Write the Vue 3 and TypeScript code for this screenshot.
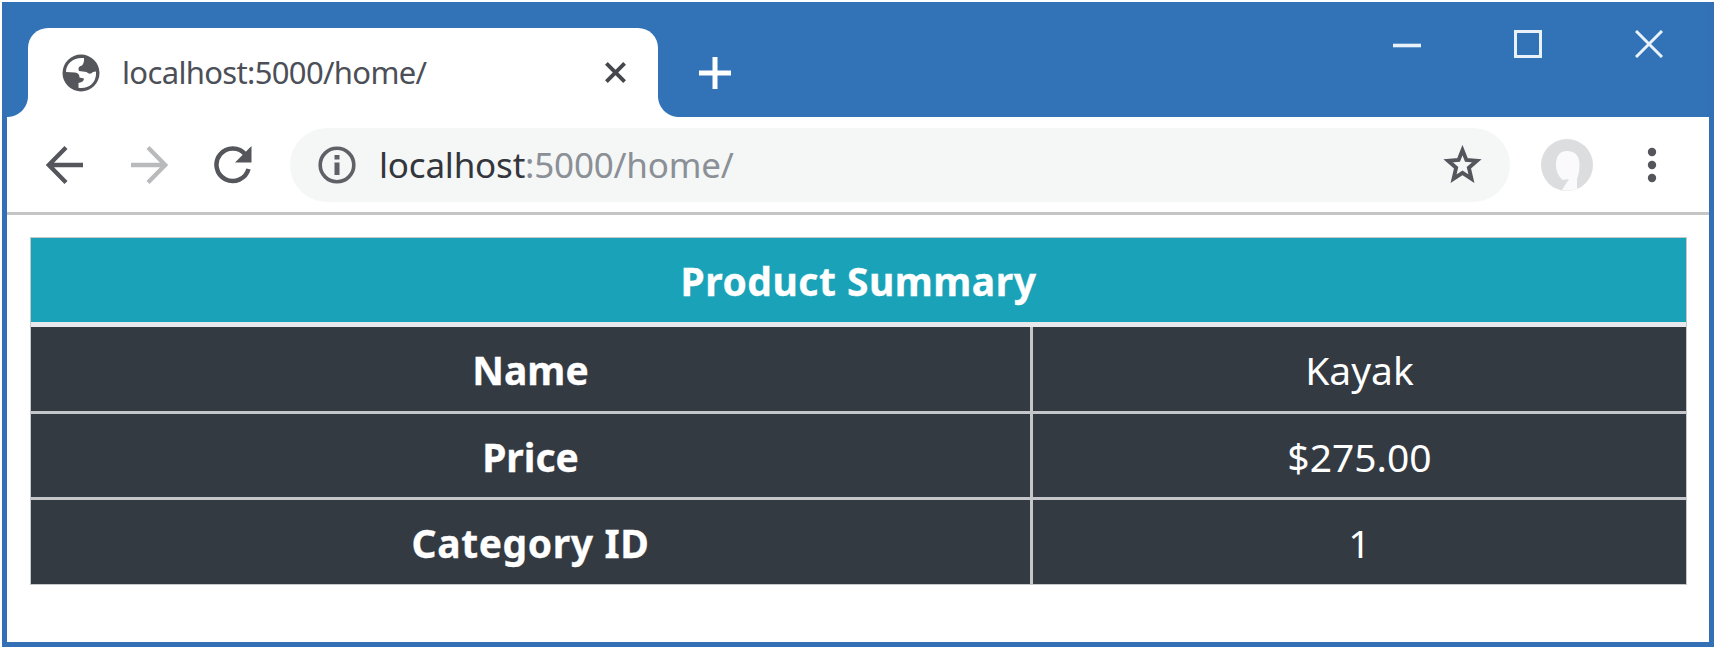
<script setup lang="ts">
interface SummaryRow {
  label: string
  value: string
  id: string
}

const rows: SummaryRow[] = [
  { label: 'Name', value: 'Kayak', id: 'name' },
  { label: 'Price', value: '$275.00', id: 'price' },
  { label: 'Category ID', value: '1', id: 'category' },
]
</script>

<template>
  <div class="window">
    <header class="titlebar">
      <div class="tab">
        <svg class="globe" viewBox="0 0 38 38">
          <circle cx="19" cy="19" r="18.5" fill="#54565b" />
          <path d="M22 4C12 3 4 9 4 18L13 18.500Q17.500 19 17.500 23.500L22 24.500Q22 28 16.500 29V33.700C26 35 33 30 34 21V17.500L31 18Q28 21.500 24.500 18L17 17Q15 12.500 20 11.500Q22.500 9 22 4Z" fill="#fff" />
        </svg>
        <span class="tab-title">localhost:5000/home/</span>
        <svg class="tab-close" viewBox="0 0 24 24"><path d="M2.500 2.500 21.500 21.500M21.500 2.500 2.500 21.500" stroke="#45474c" stroke-width="4" /></svg>
      </div>
      <svg class="plus" viewBox="0 0 32 32"><path d="M16 0V32M0 16H32" stroke="#fff" stroke-width="5" /></svg>
      <div class="controls">
        <svg viewBox="0 0 28 28"><path d="M0 15.500H28" stroke-width="3.600" /></svg>
        <svg viewBox="0 0 28 28"><path d="M1.500 1.500H26.500V26.500H1.500Z" /></svg>
        <svg viewBox="0 0 28 28"><path d="M1 1 27 27M27 1 1 27" /></svg>
      </div>
    </header>

    <nav class="toolbar">
      <svg class="nav-icon" viewBox="0 0 38 38"><path d="M37 19H3M20 1.500 2.800 19 20 36.500" fill="none" stroke="#54565b" stroke-width="4.300" /></svg>
      <svg class="nav-icon forward" viewBox="0 0 38 38"><path d="M1 19H35M18 1.500 35.200 19 18 36.500" fill="none" stroke="#b9babb" stroke-width="4.300" /></svg>
      <svg class="nav-icon reload" viewBox="0 0 38 38">
        <path d="M31.500 8.500A16.300 16.300 0 1 0 34.500 23" fill="none" stroke="#54565b" stroke-width="4.500" />
        <path d="M37.500 0V16.500H21Z" fill="#54565b" />
      </svg>
      <div class="address">
        <svg class="info" viewBox="0 0 38 38">
          <circle cx="19" cy="19" r="16.800" fill="none" stroke="#5f6166" stroke-width="3.600" />
          <path d="M19 9V13.500M19 16.500V29" stroke="#5f6166" stroke-width="5" />
        </svg>
        <span class="url"><span class="host">localhost</span>:5000/home/</span>
        <svg class="star" viewBox="0 0 38 38"><path d="M19 5 22.800 14.500 33 15.400 25.200 22.200 27.700 32.800 19 27.200 10.300 32.800 12.800 22.200 5 15.400 15.200 14.500Z" fill="none" stroke="#54565b" stroke-width="3.800" /></svg>
      </div>
      <svg class="avatar" viewBox="0 0 52 52">
        <circle cx="26" cy="26" r="26" fill="#dcdddf" />
        <path d="M26 12C18 12 15 18 15 26C15 33 18 38 22 41L28 40L21 51Q28 53 36 50V40C38 35 38.500 30 38.500 25C38.500 17 34 12 26 12Z" fill="#fafafc" />
      </svg>
      <svg class="menu" viewBox="0 0 10 36"><g fill="#54565b"><circle cx="5" cy="5" r="4.200" /><circle cx="5" cy="18" r="4.200" /><circle cx="5" cy="31" r="4.200" /></g></svg>
    </nav>

    <main class="page">
      <section class="summary">
        <div class="heading"><span class="text-heading">Product Summary</span></div>
        <div v-for="row in rows" :key="row.id" class="row">
          <div class="label"><span :class="'label-' + row.id">{{ row.label }}</span></div>
          <div class="value"><span :class="'value-' + row.id">{{ row.value }}</span></div>
        </div>
      </section>
    </main>
  </div>
</template>

<style>
html,
body {
  margin: 0;
  background: #fff;
  overflow: hidden;
}
</style>

<style scoped>
.window {
  box-sizing: border-box;
  width: 1712px;
  height: 645px;
  margin: 2px;
  border: 5px solid #3470b5;
  border-top: 0;
  background: #fff;
  font-family: "Noto Sans", "Open Sans", sans-serif;
  white-space: nowrap;
}
svg {
  display: block;
  flex: none;
}
.titlebar {
  display: flex;
  height: 115px;
  background: #3272b6;
}
.tab {
  position: relative;
  box-sizing: border-box;
  display: flex;
  align-items: center;
  width: 630px;
  height: 89px;
  margin: 26px 0 0 21px;
  padding: 0 31px 0 34px;
  border-radius: 20px 20px 0 0;
  background: #fff;
}
.tab::before,
.tab::after {
  content: "";
  position: absolute;
  bottom: 0;
  width: 21px;
  height: 21px;
}
.tab::before {
  right: 100%;
  background: radial-gradient(circle at 0 0, transparent 20.500px, #fff 21.500px);
}
.tab::after {
  left: 100%;
  background: radial-gradient(circle at 100% 0, transparent 20.500px, #fff 21.500px);
}
.globe {
  width: 38px;
  height: 38px;
}
.tab-title {
  margin: 0 0 2px 22px;
  font-size: 31px;
  line-height: 40px;
  letter-spacing: -0.660px;
  color: #4c4f57;
}
.tab-close {
  width: 23px;
  height: 23px;
  margin-left: auto;
}
.plus {
  width: 32px;
  height: 32px;
  margin: 55px 0 0 41px;
}
.controls {
  display: flex;
  gap: 93px;
  margin: 28px 46px 0 auto;
}
.controls svg {
  width: 28px;
  height: 28px;
  fill: none;
  stroke: #e9f1fa;
  stroke-width: 3;
}
.toolbar {
  box-sizing: border-box;
  display: flex;
  align-items: center;
  height: 97px;
  padding: 0 52px 0 39px;
  border-bottom: 3px solid #c5c5c5;
}
.nav-icon {
  width: 38px;
  height: 38px;
}
.forward,
.reload {
  margin-left: 46px;
}
.address {
  box-sizing: border-box;
  display: flex;
  align-items: center;
  width: 1220px;
  height: 74px;
  margin-left: 38px;
  padding: 0 28px;
  border-radius: 37px;
  background: #f5f6f6;
}
.info {
  width: 38px;
  height: 38px;
}
.url {
  margin-left: 23px;
  font-size: 35px;
  line-height: 44px;
  letter-spacing: -0.200px;
  color: #8b9097;
}
.host {
  color: #33363c;
}
.star {
  width: 39px;
  height: 39px;
  margin-left: auto;
}
.avatar {
  width: 52px;
  height: 52px;
  margin-left: 31px;
}
.menu {
  width: 10px;
  height: 36px;
  margin-left: auto;
}
.toolbar {
  height: 98px;
}
.page {
  padding: 22px 22px 0 23px;
}
.summary {
  display: grid;
  grid-template-rows: 89px 87px 86px 84px;
  padding: 1px;
  background: #c5c8cb;
  color: #fff;
  font-size: 39px;
}
.heading,
.label,
.value {
  box-sizing: border-box;
  display: flex;
  align-items: center;
  justify-content: center;
}
.heading {
  border-bottom: 5px solid #e9e9ed;
  background: #1aa3b8;
  font-weight: 700;
}
.text-heading {
  letter-spacing: 0.500px;
}
.row {
  display: grid;
  grid-template-columns: 999px 1fr;
  column-gap: 3px;
}
.row:not(:last-child) {
  border-bottom: 3px solid #c5c6ca;
}
.label,
.value {
  padding-top: 1px;
  background: #343a42;
}
.label {
  font-weight: 700;
  -webkit-text-stroke: 0.300px #fff;
}
.text-heading {
  -webkit-text-stroke: 0.300px #fff;
}
.label-category {
  letter-spacing: 0.600px;
}
</style>
